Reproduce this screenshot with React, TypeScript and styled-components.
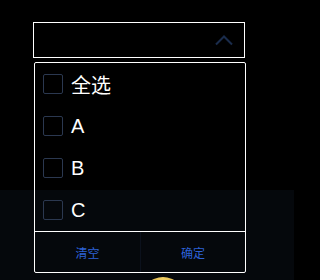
import React, { useState } from 'react'
import styled, { createGlobalStyle } from 'styled-components'

const GlobalStyle = createGlobalStyle`
  html, body {
    margin: 0;
    padding: 0;
    background: #000;
    font-family: "Liberation Sans", "Noto Sans CJK SC", Arial, sans-serif;
  }
`

const Page = styled.div`
  position: relative;
  width: 294px;
  height: 280px;
  overflow: hidden;
  display: flex;
  flex-direction: column;
`

const Header = styled.div`
  flex: 0 0 190px;
  background: #000;
  padding: 22px 0 0 33px;
  box-sizing: border-box;
`

const Body = styled.div`
  flex: 1 0 auto;
  background: #05080c;
  display: flex;
  justify-content: center;
  align-items: flex-start;
  padding: 87px 0 0 32px;
`

const GoldDisc = styled.div`
  flex: 0 0 auto;
  width: 44px;
  height: 44px;
  border-radius: 50%;
  background: radial-gradient(circle at 50% 10%, #f3d36a 0%, #c89a2e 55%, #7a5a14 100%);
`

const SelectBox = styled.div`
  width: 212px;
  height: 36px;
  box-sizing: border-box;
  border: 1px solid #fff;
  display: flex;
  align-items: center;
  justify-content: flex-end;
  padding-right: 10px;
`

const Dropdown = styled.div`
  position: absolute;
  left: 34px;
  top: 62px;
  width: 212px;
  height: 211px;
  box-sizing: border-box;
  border: 1px solid #fff;
  border-radius: 2px;
  display: flex;
  flex-direction: column;
`

const List = styled.div`
  display: flex;
  flex-direction: column;
`

const Option = styled.label`
  height: 42px;
  display: flex;
  align-items: center;
  gap: 8px;
  padding-left: 8px;
  color: #fff;
  font-size: 20px;
  cursor: pointer;
`

const Box = styled.span<{ $checked: boolean }>`
  width: 20px;
  height: 20px;
  box-sizing: border-box;
  border: 1px solid #2b3850;
  border-radius: 2px;
  background: ${p => (p.$checked ? '#2d62d6' : 'transparent')};
`

const Footer = styled.div`
  flex: 1;
  border-top: 1px solid #fff;
  display: grid;
  grid-template-columns: 1fr 1fr;
`

const FooterButton = styled.button<{ $divider?: boolean }>`
  background: transparent;
  border: none;
  border-left: ${p => (p.$divider ? '1px solid #0b111c' : 'none')};
  color: #2d62d6;
  font-size: 12px;
  font-family: "Noto Sans CJK SC", sans-serif;
  cursor: pointer;
  padding: 0;
`

const options = ['全选', 'A', 'B', 'C']

export default function App() {
  const [checked, setChecked] = useState<string[]>([])

  const toggle = (o: string) =>
    setChecked(c => (c.includes(o) ? c.filter(x => x !== o) : [...c, o]))

  return (
    <Page>
      <GlobalStyle />
      <Header>
        <SelectBox>
          <svg width="20" height="12" viewBox="0 0 20 12">
            <path d="M2 10.5 L10 2.5 L18 10.5" fill="none" stroke="#1a2c4c" strokeWidth="2" />
          </svg>
        </SelectBox>
      </Header>
      <Body>
        <GoldDisc />
      </Body>
      <Dropdown>
        <List>
          {options.map(o => (
            <Option key={o} onClick={() => toggle(o)}>
              <Box $checked={checked.includes(o)} />
              {o}
            </Option>
          ))}
        </List>
        <Footer>
          <FooterButton onClick={() => setChecked([])}>清空</FooterButton>
          <FooterButton $divider>确定</FooterButton>
        </Footer>
      </Dropdown>
    </Page>
  )
}
